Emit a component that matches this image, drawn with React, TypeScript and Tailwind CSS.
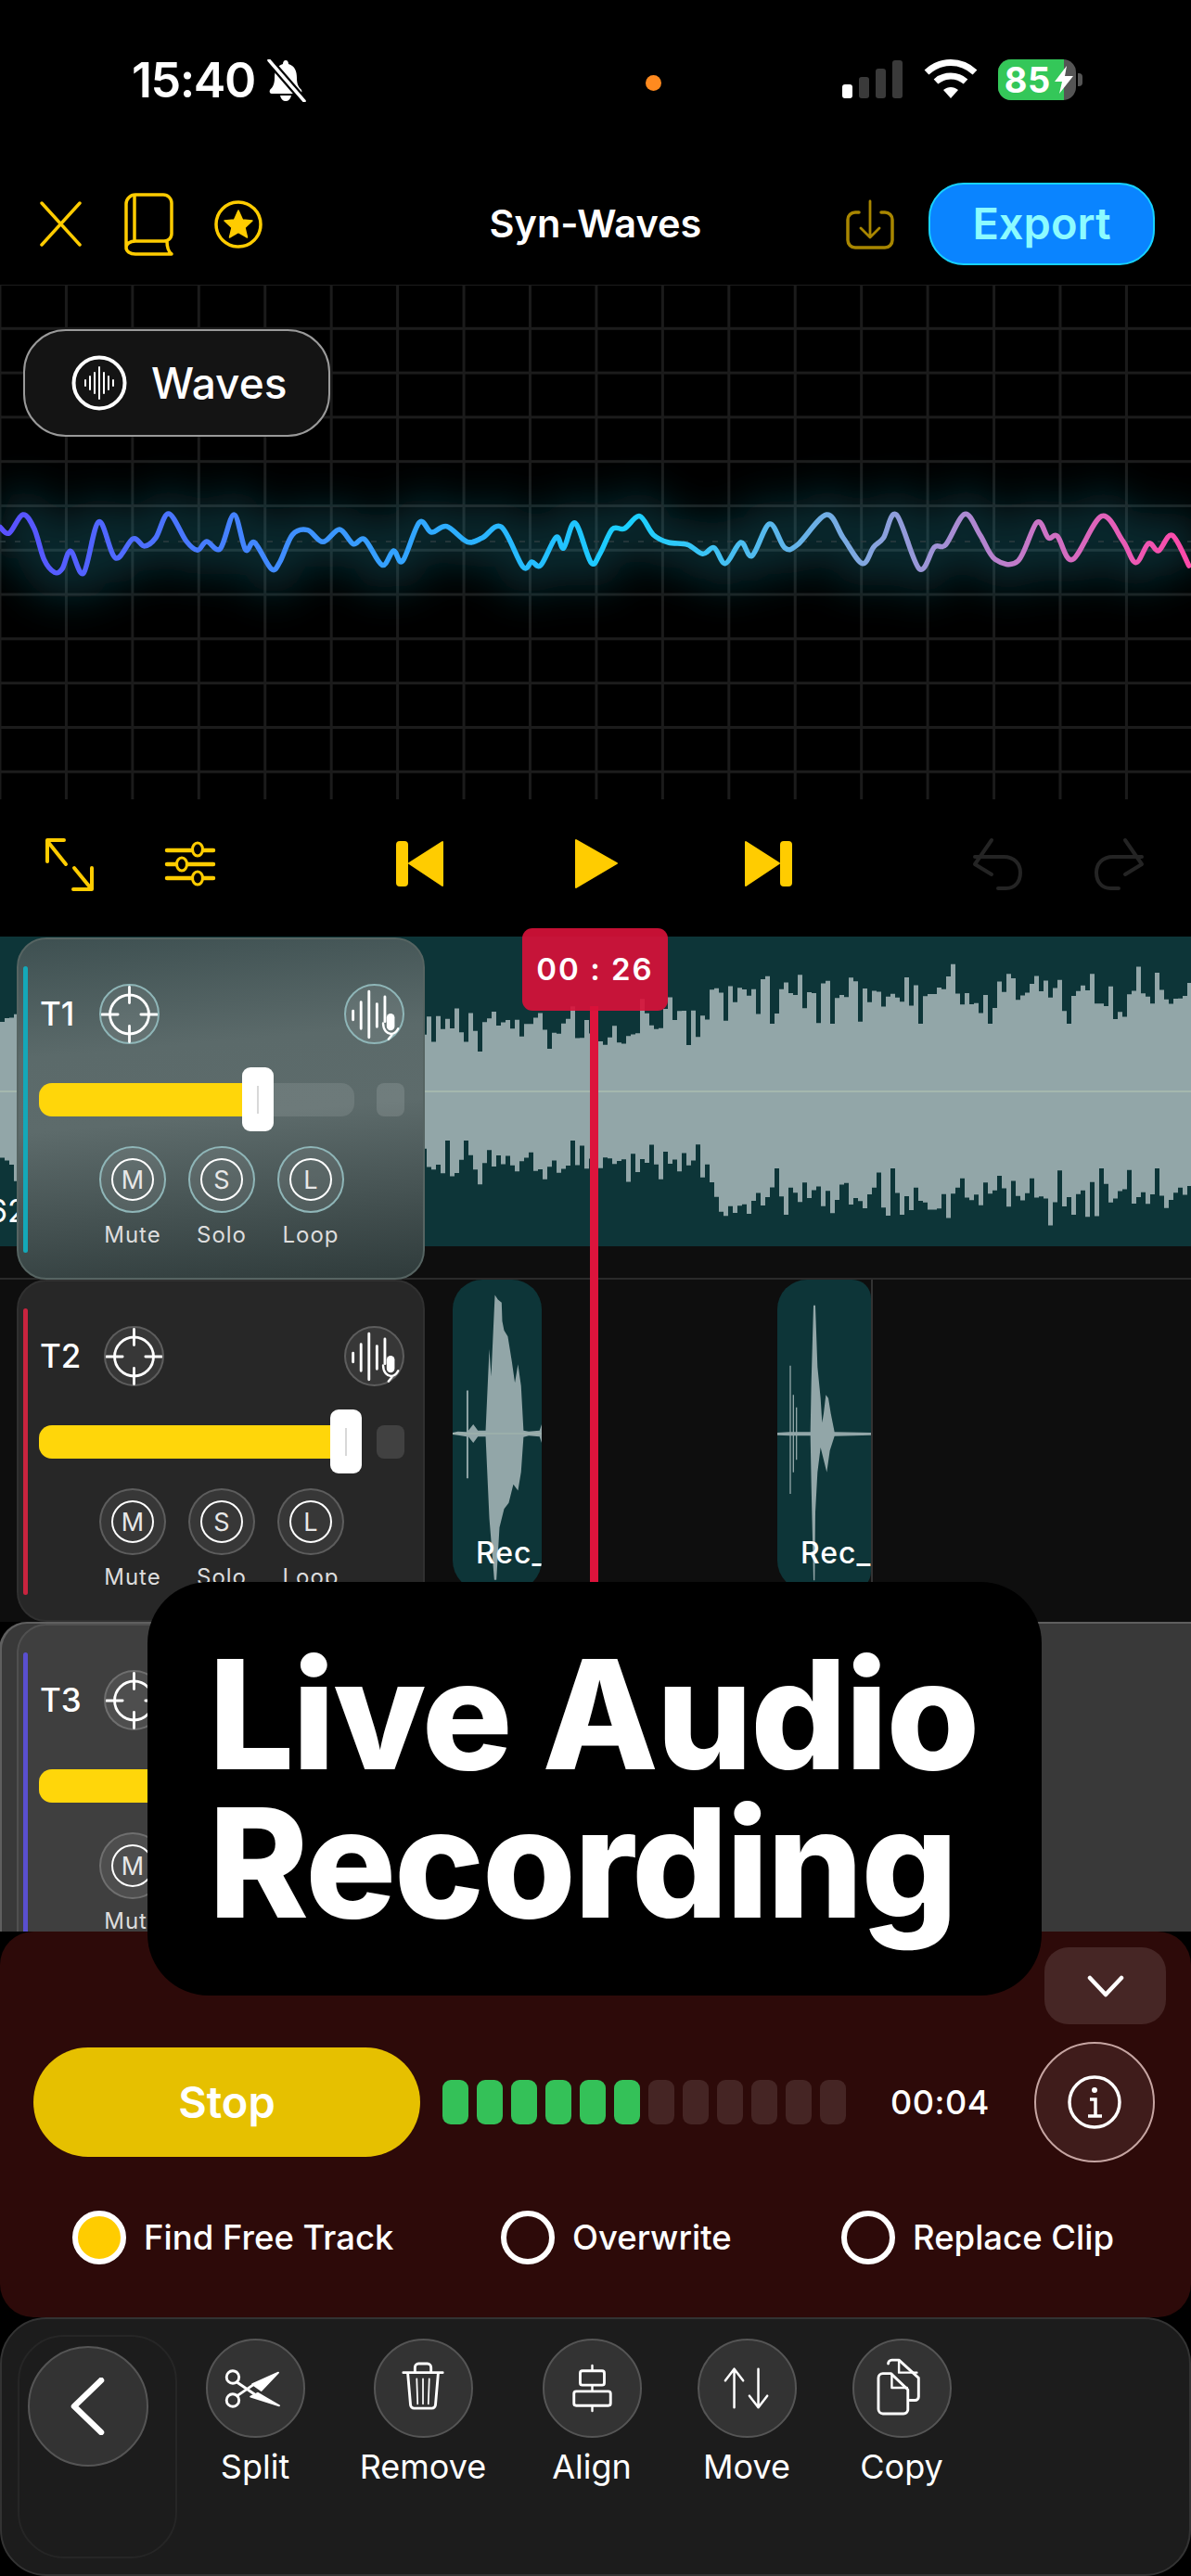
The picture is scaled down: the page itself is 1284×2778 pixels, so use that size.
import React from 'react';

// zoomed trace of the live wave, x over 1568 wide, y over 1500 high
const wavePts: number[][] = [
  [0,205],[12,225],[30,165],[45,210],[58,310],[72,352],[82,340],[93,283],[110,354],[130,188],[152,305],[175,243],[190,267],[205,240],[222,162],[245,250],[260,280],[272,252],[290,275],[308,165],[323,278],[335,255],[357,340],[368,320],[385,230],[405,215],[425,253],[447,213],[465,260],[480,245],[503,328],[518,282],[530,315],[552,190],[568,222],[588,203],[615,253],[635,240],[660,205],[688,333],[700,318],[712,328],[732,238],[742,273],[757,192],[778,320],[790,290],[806,212],[822,210],[842,170],[860,230],[880,255],[905,262],[925,292],[940,272],[955,323],[975,255],[990,298],[1013,195],[1033,272],[1050,262],[1088,165],[1110,240],[1135,323],[1150,270],[1163,240],[1180,165],[1210,340],[1230,270],[1245,262],[1270,163],[1290,230],[1310,310],[1340,315],[1365,190],[1380,240],[1392,235],[1412,310],[1450,170],[1478,250],[1495,320],[1512,258],[1525,282],[1543,232],[1565,330],
];

function smoothPath(raw: number[][]) {
  const p = raw.map(([x, y]) => [x / 1.221, 193 + y / 3]);
  let d = `M${p[0][0]} ${p[0][1]}`;
  for (let i = 0; i < p.length - 1; i++) {
    const a = p[i - 1] || p[i];
    const b = p[i];
    const c = p[i + 1];
    const e = p[i + 2] || c;
    d += `C${b[0] + (c[0] - a[0]) / 6} ${b[1] + (c[1] - a[1]) / 6} ${c[0] - (e[0] - b[0]) / 6} ${c[1] - (e[1] - b[1]) / 6} ${c[0]} ${c[1]}`;
  }
  return d;
}
const wavePath = smoothPath(wavePts);

function rnd(i: number) {
  const s = Math.sin(i * 127.1 + 11.7) * 43758.5453;
  return s - Math.floor(s);
}

// mostly flat with a few deep notches, like the real clip edge
function edge(i: number) {
  const a = (rnd(i) + rnd(i + 40) + rnd(i + 80)) / 3;
  return rnd(i + 900) > 0.86 ? Math.min(1, a + 0.4) : a;
}

// stepped outline of the T1 clip, in row coordinates (row top = 1010)
function clipOutline() {
  const w = 5;
  const top: string[] = [];
  const bottom: string[] = [];
  for (let i = 0; i * w < 1284; i++) {
    const x = i * w;
    const up = edge(i);
    const down = edge(i + 500);
    let t: number, b: number;
    if (x < 640) { t = 62 + up * 62; b = 272 - down * 52; }
    else if (x < 690) { t = 88 + up * 36; b = 272 - down * 52; }
    else if (x < 764) { t = 52 + up * 66; b = 270 - down * 48; }
    else { t = 24 + up * 70; b = 318 - down * 68; }
    top.push(`${x} ${t} ${x + w} ${t}`);
    bottom.unshift(`${x + w} ${b} ${x} ${b}`);
  }
  return [...top, ...bottom].join(' ');
}
const t1Outline = clipOutline();

function Crosshair() {
  return (
    <svg width="64" height="64" viewBox="0 0 64 64" fill="none" stroke="white" strokeWidth="3">
      <circle cx="32" cy="32" r="22" />
      <path d="M32 1V19M32 45V63M1 32H19M45 32H63" strokeLinecap="round" />
    </svg>
  );
}

function WaveMic() {
  return (
    <svg width="64" height="64" viewBox="0 0 64 64" fill="none" stroke="white" strokeWidth="3" strokeLinecap="round">
      <path d="M8 28V38M17 18V48M26 6V58M35 20V46M44 12V40" />
      <rect x="46" y="31" width="9" height="19" rx="4.5" fill="white" stroke="none" />
      <path d="M42 42C42 50 47 54 51 54C54 54 57 52 59 48M48 60L52 55" strokeWidth="2.5" />
    </svg>
  );
}

function GlassCircle({ size, tone, children }: { size: string; tone: string; children: React.ReactNode }) {
  const look =
    tone === 'teal'
      ? 'bg-[#ffffff14] border-[#8fb6b8]'
      : 'bg-[#ffffff14] border-[#ffffff30]';
  return (
    <div className={`${size} ${look} shrink-0 rounded-full border-2 flex items-center justify-center`}>
      {children}
    </div>
  );
}

function TrackPanel({ label, stripe, crossLeft, fill, tone, bg }: { label: string; stripe: string; crossLeft: string; fill: number; tone: string; bg: string }) {
  return (
    <div className={`${bg} w-[440px] h-[369px] shrink-0 rounded-[32px] flex pl-[5px] relative z-10 ml-[18px]`}>
      <div className={`${stripe} w-[5px] h-[309px] mt-[29px] rounded-full shrink-0`} />
      <div className="ml-[14px] flex flex-col">
        <div className="flex items-center mt-[48px] h-[65px]">
          <span className="w-[64px] -ml-[1px] text-[35px] font-medium text-white">{label}</span>
          <div className={crossLeft}>
            <GlassCircle size="w-[65px] h-[65px]" tone={tone}><Crosshair /></GlassCircle>
          </div>
          <div className="ml-auto">
            <GlassCircle size="w-[65px] h-[65px]" tone={tone}><WaveMic /></GlassCircle>
          </div>
        </div>
        <div className="flex items-center mt-[25px] h-[69px] -ml-[2px]">
          <div className="relative w-[340px] h-[36px] rounded-[14px] bg-[#ffffff1a]">
            <div className="h-full rounded-l-[14px] bg-[#ffd60a]" style={{ width: fill }} />
            <div className="absolute top-[-16.5px] h-[69px] w-[34px] rounded-[9px] bg-white flex items-center justify-center" style={{ left: fill - 1 }}>
              <div className="w-[2px] h-[30px] bg-[#d8d8d8]" />
            </div>
          </div>
          <div className="ml-[24px] w-[30px] h-[36px] rounded-[8px] bg-[#ffffff1f]" />
        </div>
        <div className="flex mt-[16px] ml-[63px] gap-[24px]">
          {[['M', 'Mute'], ['S', 'Solo'], ['L', 'Loop']].map(([k, name]) => (
            <div key={k} className="w-[72px] flex flex-col items-center">
              <GlassCircle size="w-[72px] h-[72px]" tone={tone}>
                <div className="w-[46px] h-[46px] rounded-full border-[2.5px] border-white flex items-center justify-center text-[27px] leading-none text-[#e8e8e8]">{k}</div>
              </GlassCircle>
              <span className="mt-[9px] text-[24px] leading-[30px] tracking-[1px] text-[#dddddd]">{name}</span>
            </div>
          ))}
        </div>
      </div>
    </div>
  );
}

function ToolButton({ name, left, children }: { name: string; left: string; children: React.ReactNode }) {
  return (
    <div className={`${left} w-[150px] mt-[4px] flex flex-col items-center`}>
      <div className="w-[107px] h-[107px] rounded-full bg-[#333333] border-2 border-[#555555] flex items-center justify-center">
        <svg width="107" height="107" viewBox="0 0 107 107" fill="none" stroke="white" strokeWidth="2.6" strokeLinecap="round" strokeLinejoin="round">
          {children}
        </svg>
      </div>
      <span className="mt-[9px] text-[36px] leading-[44px] text-white">{name}</span>
    </div>
  );
}

function Radio({ label, on, width }: { label: string; on?: boolean; width: string }) {
  return (
    <div className={`${width} flex items-center gap-[19px]`}>
      <div className={`w-[58px] h-[58px] rounded-full border-[6px] border-white ${on ? 'bg-[#ffcc00]' : ''}`} />
      <span className="text-[36.5px] font-medium text-white">{label}</span>
    </div>
  );
}

export default function App() {
  return (
    <div className="relative w-[1284px] h-[2778px] overflow-hidden bg-black font-[Inter,sans-serif] text-white">
      {/* status bar */}
      <div className="h-[180px] flex items-start pt-[58px]">
        <span className="ml-[142px] text-[52px] leading-[58px] font-semibold tracking-[-1.5px]">15:40</span>
        <svg className="ml-[12px] mt-[6px]" width="44" height="46" viewBox="0 0 44 46">
          <path d="M21 1C23 1 24 3 24 5C31 7 33 13 33 20C33 27 35 30 38 33C39 35 38 37 36 37H6C4 37 3 35 4 33C7 30 9 27 9 20C9 13 11 7 18 5C18 3 19 1 21 1ZM15 39H27C26 43 24 45 21 45C18 45 16 43 15 39Z" fill="white" />
          <path d="M3 1L41 45" stroke="black" strokeWidth="8" />
          <path d="M3 1L41 45" stroke="white" strokeWidth="3.5" strokeLinecap="round" />
        </svg>
        <div className="ml-[365px] mt-[23px] w-[17px] h-[17px] rounded-full bg-[#ff8a1f]" />
        <div className="ml-[195px] mt-[7px] flex items-end gap-[7px] h-[41px]">
          <div className="w-[11px] h-[15px] rounded-[3px] bg-white" />
          <div className="w-[11px] h-[23px] rounded-[3px] bg-[#3a3a3a]" />
          <div className="w-[11px] h-[32px] rounded-[3px] bg-[#3a3a3a]" />
          <div className="w-[11px] h-[41px] rounded-[3px] bg-[#3a3a3a]" />
        </div>
        <svg className="ml-[23px] mt-[5px]" width="58" height="44" viewBox="0 0 58 44" fill="none" stroke="white" strokeWidth="7">
          <path d="M3 15C18 1 40 1 55 15" />
          <path d="M13 25C22 17 36 17 45 25" />
          <path d="M21 34L29 43L37 34C32 30 26 30 21 34Z" fill="white" stroke="none" />
        </svg>
        <div className="ml-[22px] mt-[6px] relative w-[84px] h-[44px] rounded-[14px] overflow-hidden bg-[#555555]">
          <div className="w-[71px] h-full bg-[#34c759] flex items-center pl-[7px] text-[38px] leading-none font-bold tracking-[0.5px]">85</div>
          <svg className="absolute top-[7px] left-[60px]" width="22" height="30" viewBox="0 0 22 30">
            <path d="M14 0L1 17H9L6 30L21 11H12Z" fill="white" />
          </svg>
        </div>
        <div className="ml-[2px] mt-[21px] w-[5px] h-[14px] rounded-r-[4px] bg-[#555555]" />
      </div>

      {/* title bar */}
      <div className="h-[127px] grid grid-cols-[1fr_auto_1fr] items-center">
        <div className="flex items-center pl-[43px] -mt-[4px]">
          <svg width="45" height="49" viewBox="0 0 45 49" fill="none" stroke="#ffcc00" strokeWidth="3.5" strokeLinecap="round">
            <path d="M2 2L43 47M43 2L2 47" />
          </svg>
          <svg className="ml-[46px]" width="53" height="68" viewBox="0 0 53 68" fill="none" stroke="#ffcc00" strokeWidth="3.5" strokeLinejoin="round">
            <path d="M2 58V12A10 10 0 0 1 12 2H42A9 9 0 0 1 51 11V44A8 8 0 0 1 43 52H12C6 52 2 55 2 59C2 63 6 66 12 66H51C47 63 46 58 46 52" />
            <path d="M11 3V52" />
          </svg>
          <svg className="ml-[44px]" width="52" height="52" viewBox="0 0 52 52">
            <circle cx="26" cy="26" r="24" fill="none" stroke="#ffcc00" strokeWidth="3.5" />
            <path d="M26 11L30.500 21L41 22L33 29.500L35.500 40L26 34.500L16.500 40L19 29.500L11 22L21.500 21Z" fill="#ffcc00" stroke="#ffcc00" strokeWidth="1.500" strokeLinejoin="round" />
          </svg>
        </div>
        <span className="text-[41.5px] font-semibold -mt-[4px]">Syn-Waves</span>
        <div className="flex items-center justify-end pr-[39px] -mt-[4px]">
          <svg width="52" height="54" viewBox="0 0 52 54" fill="none" stroke="#a88600" strokeWidth="3.5" strokeLinecap="round" strokeLinejoin="round">
            <path d="M14 14H10A8 8 0 0 0 2 22V44A8 8 0 0 0 10 52H42A8 8 0 0 0 50 44V22A8 8 0 0 0 42 14H38" />
            <path d="M26 2V41M16 31L26 41L36 31" strokeWidth="2.800" />
          </svg>
          <div className="ml-[37px] w-[244px] h-[89px] rounded-[38px] bg-[#0a84ff] border-2 border-[#17d2ff] flex items-center justify-center text-[47px] font-semibold text-[#8cfbff]">
            Export
          </div>
        </div>
      </div>

      {/* wave canvas */}
      <div className="relative h-[555px] bg-[linear-gradient(to_right,#1b1b1b_3px,transparent_3px),linear-gradient(to_bottom,#1c1c1c_3px,transparent_3px)] bg-[size:71.45px_47.8px] bg-[position:-1.500px_-2px]">
        <svg className="absolute inset-0" width="1284" height="555" viewBox="0 0 1284 555">
          <defs>
            <linearGradient id="line" x1="0" x2="1284" y1="0" y2="0" gradientUnits="userSpaceOnUse">
              <stop offset="0" stopColor="#5a50ff" />
              <stop offset="0.25" stopColor="#3e90ff" />
              <stop offset="0.53" stopColor="#1ad0ff" />
              <stop offset="0.72" stopColor="#7fa8e0" />
              <stop offset="0.85" stopColor="#c07ccb" />
              <stop offset="1" stopColor="#ff48a8" />
            </linearGradient>
            <filter id="glow" x="-10%" y="-300%" width="120%" height="700%">
              <feGaussianBlur stdDeviation="22" />
            </filter>
          </defs>
          <path d={wavePath} fill="none" stroke="#17a6bf" strokeOpacity="0.24" strokeWidth="54" filter="url(#glow)" />
          <path d="M0 277H1284" stroke="#2c3c40" strokeWidth="1.500" strokeDasharray="6 10" />
          <path d={wavePath} fill="none" stroke="url(#line)" strokeWidth="5.500" strokeLinejoin="round" strokeLinecap="round" />
        </svg>
        <div className="relative ml-[25px] w-[331px] h-[116px] top-[48px] rounded-[46px] bg-[#141414] border-2 border-[#9a9a9a] flex items-center pl-[50px]">
          <svg width="60" height="60" viewBox="0 0 60 60" fill="none" stroke="white" strokeLinecap="round">
            <circle cx="30" cy="30" r="27.500" strokeWidth="4" />
            <path d="M15 27V33M20 23V37M25 19V41M30 13V47M35 19V41M40 23V37M45 27V33" strokeWidth="2" />
          </svg>
          <span className="ml-[26px] text-[46px] font-medium">Waves</span>
        </div>
      </div>

      {/* transport */}
      <div className="h-[148px] relative">
        <svg className="block" width="1284" height="148" viewBox="0 862 1284 148">
          <g fill="none" stroke="#ffcc00" strokeWidth="4" strokeLinecap="round" strokeLinejoin="round">
            <path d="M69 906H51V929M51 907L71 932" />
            <path d="M80 936L98 958M99 936V959H79" />
            <path d="M180 917H207M219 917H230M180 932H190M202 932H230M180 947H207M219 947H230" strokeWidth="4.500" />
            <ellipse cx="213" cy="916" rx="5.500" ry="7" strokeWidth="3" />
            <ellipse cx="196" cy="932" rx="5.500" ry="7" strokeWidth="3" />
            <ellipse cx="213" cy="947" rx="5.500" ry="7" strokeWidth="3" />
          </g>
          <g fill="#ffcc00" stroke="#ffcc00" strokeWidth="2" strokeLinejoin="round">
            <rect x="428" y="908" width="11" height="47" rx="3" />
            <path d="M477 908V955L441 931Z" />
            <path d="M621 906V957L665 931Z" />
            <rect x="842" y="908" width="11" height="47" rx="3" />
            <path d="M804 908V955L840 931Z" />
          </g>
          <g fill="none" stroke="#242424" strokeWidth="4" strokeLinecap="round" strokeLinejoin="round">
            <path d="M1069 906L1051 932L1069 943M1051 924H1082C1094 924 1100 932 1100 941C1100 951 1094 958 1085 958H1076" />
            <path d="M1213 906L1231 932L1213 943M1231 924H1200C1188 924 1182 932 1182 941C1182 951 1188 958 1197 958H1206" />
          </g>
        </svg>
      </div>

      {/* tracks */}
      <div className="h-[1073px] overflow-hidden flex flex-col">
        <div className="relative h-[370px] shrink-0 bg-[#0e0e0e] border-b-2 border-[#2a2a2a] pt-[1px]">
          <div className="absolute left-0 right-0 top-0 h-[334px] bg-[#0d3538] overflow-hidden">
            <svg className="block" width="1284" height="334" viewBox="0 0 1284 334">
              <polygon points={t1Outline} fill="#92a6a8" />
              <path d="M0 167H1284" stroke="#a5b8ae" strokeWidth="2" />
            </svg>
            <span className="absolute left-[-13px] top-[270px] text-[34px] text-white">62</span>
          </div>
          <TrackPanel
            label="T1"
            stripe="bg-[#14a8b8]"
            crossLeft=""
            fill={220}
            tone="teal"
            bg="bg-[linear-gradient(175deg,#3e5051_0%,#5b6a6a_32%,#5d6b6b_52%,#2f3b3b_100%)] border-2 border-[#566462]"
          />
        </div>
        <div className="h-[369px] shrink-0 bg-[#0e0e0e] flex">
          <TrackPanel
            label="T2"
            stripe="bg-[#c8243f]"
            crossLeft="ml-[5px]"
            fill={315}
            tone="gray"
            bg="bg-[#272727] border-2 border-[#303030]"
          />
          <div className="relative ml-[30px] w-[96px] h-[335px] shrink-0 rounded-[32px] bg-[#0d3538] overflow-hidden">
            <svg className="absolute inset-0" width="96" height="325" viewBox="53 17 289 975" fill="#92a6a8">
              <path d="M53 512L70 508L98 510L98 375L104 375L104 505L120 485L135 505L160 505L172 240L178 330L190 65L200 80L212 90L214 150L220 180L232 200L245 280L255 350L265 290L275 360L283 505L300 508L335 505L342 485V545L335 525L300 522L283 526L275 640L265 700L250 680L235 740L220 760L205 820L195 990H188L172 790L160 525L135 525L120 545L104 525V660H98V525L70 520L53 518Z" />
              <path d="M53 515H342" stroke="#a5b8ae" strokeWidth="3" />
            </svg>
            <span className="absolute left-[25px] top-[275px] text-[32px] font-medium leading-[40px] tracking-[1px] text-white whitespace-nowrap">Rec_62</span>
          </div>
          <div className="relative ml-[254px] w-[101px] h-[335px] shrink-0 rounded-l-[32px] rounded-r-[20px] bg-[#0d3538] overflow-hidden">
            <svg className="absolute inset-0" width="101" height="325" viewBox="1105 17 303 975" fill="#92a6a8">
              <path d="M1105 512L1145 510V295H1149V510L1155 510V390H1159V510H1165V430H1169V510L1212 510L1215 350L1222 100H1228L1235 300L1245 400L1250 480L1255 450L1262 390L1270 400L1278 450L1290 510L1408 512V520L1290 523L1275 570L1265 640L1245 560L1235 640L1228 770L1226 990H1222L1215 680L1212 522H1169V600H1165V522H1159V640H1155V522H1149V710H1145V522L1105 520Z" />
            </svg>
            <span className="absolute left-[25px] top-[275px] text-[32px] font-medium leading-[40px] tracking-[1px] text-white whitespace-nowrap">Rec_63</span>
          </div>
          <div className="w-[2px] h-[335px] bg-[#333333]" />
        </div>
        <div className="flex-1 bg-[#393939] border-t-2 border-l-[3px] border-[#5f5f5f] rounded-tl-[30px] -ml-[1px]">
          <div className="-ml-[2px]">
            <TrackPanel
              label="T3"
              stripe="bg-[#5a4fcf]"
              crossLeft="ml-[5px]"
              fill={315}
              tone="gray"
              bg="bg-[#3f3f3f] border-2 border-[#505050]"
            />
          </div>
        </div>
      </div>

      {/* recording panel */}
      <div className="h-[416px] rounded-[36px] bg-[#2d0a09] flex flex-col">
        <div className="flex justify-end pt-[17px] pr-[27px]">
          <div className="w-[131px] h-[83px] rounded-[26px] bg-[#462625] flex items-center justify-center">
            <svg width="40" height="24" viewBox="0 0 40 24" fill="none" stroke="white" strokeWidth="4.500" strokeLinecap="round" strokeLinejoin="round">
              <path d="M3 3L20 21L37 3" />
            </svg>
          </div>
        </div>
        <div className="flex items-center mt-[19px] pl-[36px]">
          <div className="w-[417px] h-[118px] rounded-full bg-[#e6c000] flex items-center justify-center text-[47px] font-semibold">Stop</div>
          <div className="ml-[24px] flex gap-[9px]">
            {Array.from({ length: 12 }, (_, i) => (
              <div key={i} className={`w-[28px] h-[48px] rounded-[9px] ${i < 6 ? 'bg-[#34c158]' : 'bg-[#452524]'}`} />
            ))}
          </div>
          <span className="ml-[48px] text-[36px] font-medium tracking-[0.5px] w-[107px] whitespace-nowrap">00:04</span>
          <div className="ml-[48px] w-[130px] h-[130px] rounded-full bg-[#3f1c1b] border-2 border-[#c6a5a2] flex items-center justify-center">
            <svg width="60" height="60" viewBox="0 0 60 60" fill="none" stroke="white" strokeWidth="3.500">
              <circle cx="30" cy="30" r="27" />
              <circle cx="30" cy="17" r="3" fill="white" stroke="none" />
              <path d="M25 27H31V44M23 45H38" />
            </svg>
          </div>
        </div>
        <div className="flex mt-[52px] pl-[78px]">
          <Radio label="Find Free Track" on width="w-[462px]" />
          <Radio label="Overwrite" width="w-[367px]" />
          <Radio label="Replace Clip" width="w-[340px]" />
        </div>
      </div>

      {/* tool bar */}
      <div className="h-[279px] rounded-[50px] bg-[#1c1c1c] border-2 border-[#333333] flex items-start pt-[17px] pl-[17px]">
        <div className="w-[172px] h-[241px] rounded-[50px] border-2 border-[#262626] pl-[9px] pt-[10px] shrink-0">
          <div className="w-[130px] h-[130px] rounded-full bg-[#333333] border-2 border-[#555555] flex items-center justify-center">
            <svg width="40" height="62" viewBox="0 0 40 62" fill="none" stroke="white" strokeWidth="6.500" strokeLinecap="round" strokeLinejoin="round">
              <path d="M34 3L5 31L34 59" />
            </svg>
          </div>
        </div>
        <ToolButton name="Split" left="ml-[9px]">
          <circle cx="28" cy="41" r="7" strokeWidth="3" />
          <circle cx="28" cy="67" r="7" strokeWidth="3" />
          <path d="M33 47L52 60M33 62L52 49" strokeWidth="3" />
          <path d="M50 49L79 36L60 56ZM56 59L80 73L48 63Z" fill="white" strokeWidth="2" />
        </ToolButton>
        <ToolButton name="Remove" left="ml-[31px]">
          <path d="M31 36H75M44 35V30A4 4 0 0 1 48 26H58A4 4 0 0 1 62 30V35" strokeWidth="3" />
          <path d="M36 37L39 72A4 4 0 0 0 43 76H63A4 4 0 0 0 67 72L70 37" strokeWidth="3" />
          <path d="M46 43L47 71M53 43V71M60 43L59 71" strokeWidth="1.800" />
        </ToolButton>
        <ToolButton name="Align" left="ml-[32px]">
          <path d="M53.500 28V34M53.500 50V57M53.500 73V79" strokeWidth="2.500" />
          <rect x="40" y="34" width="27" height="16" rx="2.500" strokeWidth="3" />
          <rect x="33" y="57" width="41" height="16" rx="2.500" strokeWidth="3" />
        </ToolButton>
        <ToolButton name="Move" left="ml-[17px]">
          <path d="M39 75V32M29 45L39 32L49 45" />
          <path d="M66 32V75M56 62L66 75L76 62" />
        </ToolButton>
        <ToolButton name="Copy" left="ml-[17px]">
          <path d="M38 26A4 4 0 0 1 42 22H50L72 42V63A4 4 0 0 1 68 67H62" strokeWidth="3" />
          <path d="M50 22V36H70" strokeWidth="2.500" />
          <path d="M27 42A5 5 0 0 1 32 37H41L60 55V78A5 5 0 0 1 55 82H32A5 5 0 0 1 27 77Z" fill="#333333" strokeWidth="3" />
          <path d="M42 38V53H59" strokeWidth="2.500" />
        </ToolButton>
      </div>

      {/* playhead */}
      <div className="absolute z-20 left-[636px] top-[1085px] w-[9px] h-[640px] bg-[#dc143c]" />
      <div className="absolute z-20 left-[563px] top-[1001px] w-[157px] h-[89px] rounded-[11px] bg-[#d81239e8] flex items-center justify-center text-[33px] font-semibold tracking-[2px]">
        00 : 26
      </div>

      {/* caption over the app */}
      <div className="absolute z-30 left-[159px] top-[1706px] w-[964px] h-[446px] rounded-[66px] bg-black flex flex-col justify-center pl-[66px] text-[163px] leading-[160px] font-extrabold tracking-[-2px]">
        <span>Live Audio</span>
        <span>Recording</span>
      </div>
    </div>
  );
}
